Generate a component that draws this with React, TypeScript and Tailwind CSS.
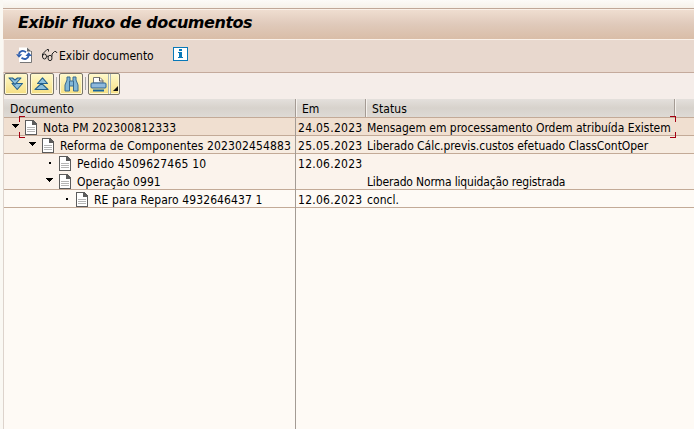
import React from "react";

function Page() {
  return (
    <svg width="12" height="15" viewBox="0 0 12 15" className="block shrink-0" shapeRendering="crispEdges">
      <path d="M0 0h8l4 4v11H0z" fill="#5c5c5c" />
      <path d="M1 1h6v4h4v9H1z" fill="#fff" />
      <path d="M2 7.500h8M2 9.500h8M2 11.500h8" stroke="#b5b5b5" />
    </svg>
  );
}

function Marker({ open }: { open: boolean }) {
  return open ? (
    <svg width="7" height="4" className="mb-[2px] shrink-0" shapeRendering="crispEdges">
      <path d="M0 0h7v1H6v1H5v1H4v1H3V3H2V2H1V1H0z" fill="#000" />
    </svg>
  ) : (
    <span className="mr-[2px] mb-px ml-[3px] h-[2px] w-[2px] shrink-0 bg-black" />
  );
}

function Refresh() {
  return (
    <svg width="16" height="16" viewBox="0 0 16 16" className="block">
      <path d="M3 .5h8.500L15 4v11H3z" fill="#fff" />
      <path d="M15.500 4v11.500H4" fill="none" stroke="#777" />
      <path d="M11 .5v4h4.500z" fill="#666" />
      <path d="M3 7C3.500 4 7 2.800 10 5.200M12.700 8.500C12 12 8.500 13 5.500 10.800" fill="none" stroke="#2f5fae" strokeWidth="1.900" />
      <path d="M0 7.200h6.200L3 10.800zM9.400 9l3.300-3.800 3.200 3.800z" fill="#2f5fae" />
    </svg>
  );
}

function Glasses() {
  return (
    <svg width="17" height="13" viewBox="0 0 17 13" className="block" fill="none" stroke="#222" strokeWidth="1">
      <path d="M7.500 2.500V.500H6L1.500 5v3" />
      <ellipse cx="3.500" cy="7.500" rx="2" ry="2.500" />
      <ellipse cx="9" cy="9" rx="2" ry="2.700" />
      <path d="M5.500 7.500 7.500 7M11 7.500V5l2.500-2.500h1.500l1 1.500" />
    </svg>
  );
}

function Info() {
  return (
    <svg width="15" height="14" viewBox="0 0 15 14" className="block" shapeRendering="crispEdges">
      <path d="M.5.5h14v13H.5z" fill="#fff" stroke="#0878b8" />
      <path d="M6 2h3v2H6zM5 5h4v5h1v1H5v-1h1V6H5z" fill="#0878b8" />
    </svg>
  );
}

function ChevronsDown() {
  return (
    <svg width="16" height="14" viewBox="0 0 16 14" fill="#8cbfdc" stroke="#24608c" strokeWidth="1.100" strokeLinejoin="round">
      <path d="M4 6.500h10.500L9.200 12.500z" />
      <path d="M1 1h3.500L7 3 9.500 1H13L7 7.500z" />
    </svg>
  );
}

function ChevronsUp() {
  return (
    <svg width="16" height="14" viewBox="0 0 16 14" fill="#8cbfdc" stroke="#24608c" strokeWidth="1.100" strokeLinejoin="round">
      <path d="M3.500 6.500 8.500.800l5 5.700z" />
      <path d="M1 12.500 7.500 6.300l6.500 6.200z" />
    </svg>
  );
}

function Binoculars() {
  return (
    <svg width="15" height="16" viewBox="0 0 15 16" fill="#82b7d7" stroke="#386a91">
      <path d="M3 1h3v4h3V1h3v3l2 5v6H9.500v-5h-4v5H1V9l2-5z" />
      <path d="M5.500 5v5M9.500 5v5" />
    </svg>
  );
}

function Printer() {
  return (
    <svg width="17" height="15" viewBox="0 0 17 15">
      <path d="M3.500 6V.500H10L13 3.500V6z" fill="#fff" stroke="#777" />
      <path d="M9.500.500V4H13" fill="none" stroke="#555" />
      <rect x="1" y="6" width="15" height="5" rx="1" fill="#8fb8db" stroke="#2d6595" />
      <path d="M3 13.500h11" stroke="#17659a" strokeWidth="2" />
    </svg>
  );
}

const buttonStyle =
  "flex h-[22px] shrink-0 items-center justify-center rounded-[2px] border border-[#77736a] bg-linear-to-b from-[#fff9c9] to-[#f6df82] shadow-[inset_0_0_0_1px_#fff8d0]";

type RowData = {
  title: string;
  date: string;
  status: string;
  open: boolean;
  row: string;
  indent: string;
  titleSpacing: string;
  statusSpacing: string;
};

const rows: RowData[] = [
  { title: "Nota PM 202300812333", date: "24.05.2023", status: "Mensagem em processamento Ordem atribuída Existem", open: true, row: "bg-[#f0dfd0] border-b-[#c3aa97]", indent: "pl-[8px]", titleSpacing: "tracking-[0.13px]", statusSpacing: "tracking-[-0.02px]" },
  { title: "Reforma de Componentes 202302454883", date: "25.05.2023", status: "Liberado Cálc.previs.custos efetuado ClassContOper", open: true, row: "bg-[#f7ece1] border-b-[#c3aa97]", indent: "pl-[25px]", titleSpacing: "tracking-[0.13px]", statusSpacing: "tracking-[-0.04px]" },
  { title: "Pedido 4509627465 10", date: "12.06.2023", status: "", open: false, row: "bg-[#fbf3ec] border-b-[#fbf3ec]", indent: "pl-[42px]", titleSpacing: "tracking-[0.2px]", statusSpacing: "" },
  { title: "Operação 0991", date: "", status: "Liberado Norma liquidação registrada", open: true, row: "bg-[#fbf3ec] border-b-[#c3aa97]", indent: "pl-[42px]", titleSpacing: "tracking-[0.05px]", statusSpacing: "tracking-[-0.15px]" },
  { title: "RE para Reparo 4932646437 1", date: "12.06.2023", status: "concl.", open: false, row: "bg-[#fefaf5] border-b-[#c3aa97]", indent: "pl-[59px]", titleSpacing: "tracking-[0.09px]", statusSpacing: "tracking-[0.05px]" },
];

export default function App() {
  return (
    <div className="flex h-[429px] w-[694px] flex-col overflow-hidden bg-[#faf8f3] pl-[3px] font-['DejaVu_Sans_Condensed','DejaVu_Sans',sans-serif] text-[12px] leading-[17px] whitespace-nowrap text-black">
      <div className="h-2 shrink-0 bg-linear-to-b from-[#fcfaf7] to-[#f6f1e9]" />
      <header className="flex h-[31px] shrink-0 items-center border-t border-[#c0a797] bg-linear-to-b from-[#f0dfd2] via-[#e0cabb] to-[#d9bda7] pl-[15px] shadow-[inset_0_1px_#faf0e7]">
        <h1 className="mt-[-4px] font-['DejaVu_Sans',sans-serif] text-[16px] font-bold italic tracking-[-0.46px] [font-stretch:normal]">Exibir fluxo de documentos</h1>
      </header>
      <div className="flex h-[34px] shrink-0 items-center border-t border-b border-l border-t-[#faf1e9] border-b-[#c4aa9c] border-l-[#f7eee8] bg-[#e8d8ce] pl-[12px]">
        <span className="mb-[2px]"><Refresh /></span>
        <span className="mb-[2px] ml-[9px]"><Glasses /></span>
        <span className="ml-px tracking-[-0.02px]">Exibir documento</span>
        <span className="mb-[4px] ml-[19px]"><Info /></span>
      </div>
      <div className="flex min-h-0 grow flex-col border-l border-[#ddd3cc]">
        <div className="flex h-[26px] shrink-0 items-start bg-[#f5ede9]">
          <div className={`${buttonStyle} w-[24px]`}><ChevronsDown /></div>
          <div className={`${buttonStyle} ml-[2px] w-[24px]`}><ChevronsUp /></div>
          <i className="mt-[4px] ml-[2px] h-[13px] w-px bg-[#aaa]" />
          <div className={`${buttonStyle} ml-[2px] w-[24px]`}><Binoculars /></div>
          <i className="mt-[4px] ml-[2px] h-[13px] w-px bg-[#aaa]" />
          <div className={`${buttonStyle} ml-[2px] w-[32px] justify-start pl-px`}>
            <Printer />
            <i className="ml-px h-5 w-[3px] border-x border-[#a9b5b7] bg-[#fff9d6]" />
            <svg width="5" height="5" className="mt-2 ml-[2px]"><path d="M5 0v5H0z" fill="#111" /></svg>
          </div>
        </div>
        <div className="flex h-[19px] shrink-0 border-b border-[#c3aa97] bg-linear-to-b from-[#e4e0dc] via-[#d7d2cc] to-[#dedad5] leading-[20px]">
          <div className="w-[291px] pl-[6px] tracking-[0.15px]">Documento</div>
          <div className="w-[70px] border-l border-[#a49b94] pl-[6px] shadow-[inset_1px_0_#f5f1ed]">Em</div>
          <div className="w-[309px] border-l border-[#a49b94] pl-[6px] tracking-[0.1px] shadow-[inset_1px_0_#f5f1ed]">Status</div>
          <div className="grow border-l border-[#a49b94] shadow-[inset_1px_0_#f5f1ed]" />
        </div>
        <div className="relative shrink-0">
          {rows.map((row) => (
            <div key={row.title} className={`flex h-[18px] border-b leading-[21px] ${row.row}`}>
              <div className={`flex h-[18px] w-[292px] items-center border-r border-r-[#a49b94] ${row.indent}`}>
                <Marker open={row.open} />
                <span className="mr-[6px] ml-[6px]"><Page /></span>
                <span className={`pt-[3px] ${row.titleSpacing}`}>{row.title}</span>
              </div>
              <div className="w-[71px] pl-[2px] tracking-[0.26px]">{row.date}</div>
              <div className={row.statusSpacing}>{row.status}</div>
            </div>
          ))}
          <svg width="657" height="22" className="absolute top-[-2px] left-[15px]" shapeRendering="crispEdges" fill="#a40012">
            <path d="M0 0h6v1H1v5H0zM0 16h1v5h5v1H0zM651 0h6v6h-1V1h-5zM656 16h1v6h-6v-1h5z" />
          </svg>
        </div>
        <div className="grow bg-[#fefaf5]"><div className="h-full w-[292px] border-r border-[#a49b94]" /></div>
      </div>
    </div>
  );
}
